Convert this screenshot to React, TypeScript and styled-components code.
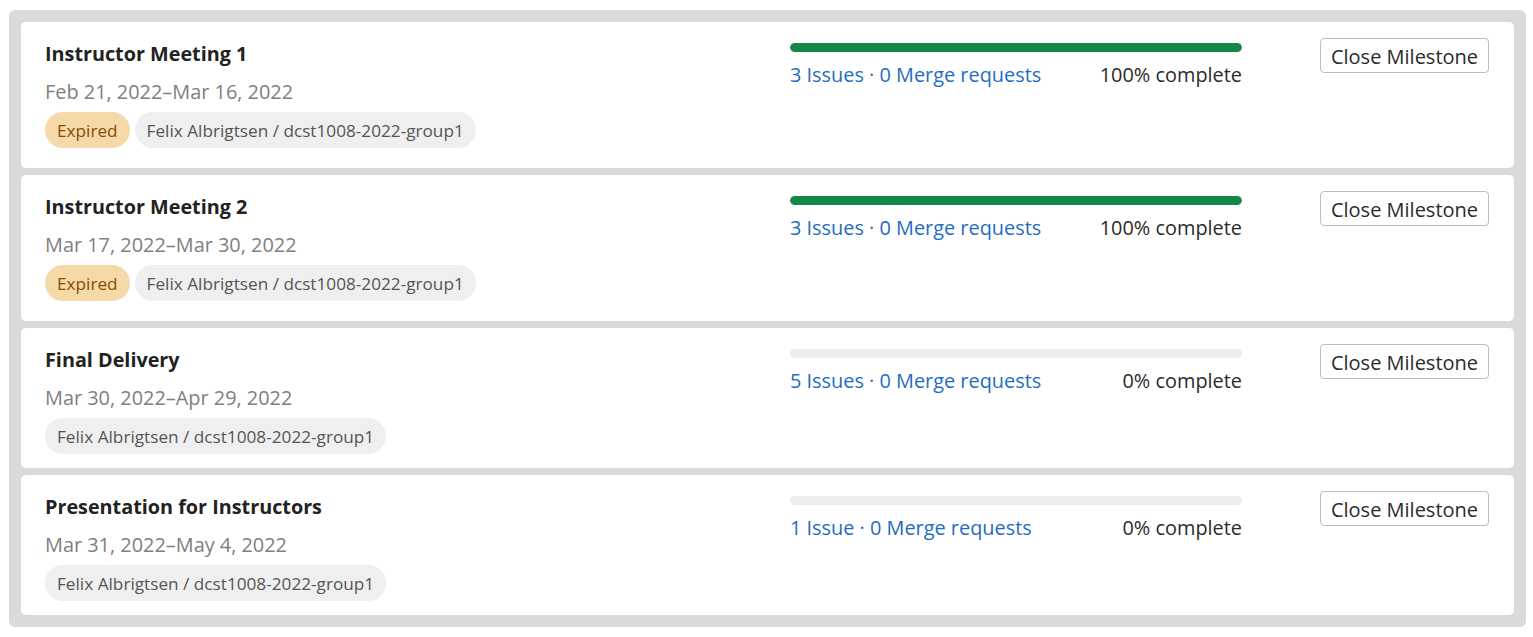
import React from "react";
import styled, { createGlobalStyle } from "styled-components";

const Global = createGlobalStyle`
  html, body { margin: 0; padding: 0; background: #ffffff; }
  body { font-family: "Open Sans", "Noto Sans", Arial, sans-serif; }
  * { box-sizing: border-box; }
`;

const Board = styled.div`
  margin: 10px 7px 0 9px;
  padding: 12px;
  background: #dadada;
  border-radius: 6px;
  display: flex;
  flex-direction: column;
  gap: 7px;
`;

const Card = styled.div<{ $tall: boolean }>`
  background: #ffffff;
  border-radius: 5px;
  padding: 17px 25px ${(p) => (p.$tall ? "20px" : "14px")} 24px;
  display: flex;
  align-items: flex-start;
`;

const Info = styled.div`
  flex: 1;
  min-width: 0;
`;

const Title = styled.div`
  font-size: 19.8px;
  font-weight: 700;
  line-height: 30px;
  color: #222222;
`;

const Dates = styled.div`
  margin-top: 8px;
  font-size: 19.9px;
  line-height: 30px;
  color: #808080;
`;

const Badges = styled.div`
  margin-top: 5px;
  display: flex;
  gap: 5px;
`;

const Badge = styled.span<{ $tone: "warning" | "neutral" }>`
  display: inline-flex;
  align-items: center;
  height: 36px;
  padding: 1px 12px 0;
  border-radius: 18px;
  font-size: 17.2px;
  background: ${(p) => (p.$tone === "warning" ? "#f5d9a8" : "#efefef")};
  color: ${(p) => (p.$tone === "warning" ? "#8a4b00" : "#555555")};
`;

const Progress = styled.div`
  width: 452px;
  margin-top: 4px;
  margin-right: 78px;
`;

const Track = styled.div`
  height: 9px;
  border-radius: 5px;
  background: #ededed;
  overflow: hidden;
`;

const Fill = styled.div`
  height: 100%;
  border-radius: 5px;
  background: #14884a;
`;

const Stats = styled.div`
  margin-top: 9px;
  display: flex;
  justify-content: space-between;
  font-size: 19.9px;
  line-height: 28px;
`;

const Links = styled.span`
  color: #1f6dc2;
`;

const Complete = styled.span`
  color: #2b2b2b;
`;

const CloseButton = styled.button`
  margin-top: -1px;
  height: 35px;
  width: 169px;
  padding: 2px 0 0;
  background: #ffffff;
  border: 1px solid #bdbdbd;
  border-radius: 4px;
  font-family: inherit;
  font-size: 20px;
  color: #2b2b2b;
  white-space: nowrap;
  cursor: pointer;
`;

type Milestone = {
  title: string;
  dates: string;
  expired: boolean;
  issues: number;
  percent: number;
};

const milestones: Milestone[] = [
  { title: "Instructor Meeting 1", dates: "Feb 21, 2022–Mar 16, 2022", expired: true, issues: 3, percent: 100 },
  { title: "Instructor Meeting 2", dates: "Mar 17, 2022–Mar 30, 2022", expired: true, issues: 3, percent: 100 },
  { title: "Final Delivery", dates: "Mar 30, 2022–Apr 29, 2022", expired: false, issues: 5, percent: 0 },
  { title: "Presentation for Instructors", dates: "Mar 31, 2022–May 4, 2022", expired: false, issues: 1, percent: 0 },
];

export default function App() {
  return (
    <>
      <Global />
      <Board>
        {milestones.map((m) => (
          <Card key={m.title} $tall={m.expired}>
            <Info>
              <Title>{m.title}</Title>
              <Dates>{m.dates}</Dates>
              <Badges>
                {m.expired && <Badge $tone="warning">Expired</Badge>}
                <Badge $tone="neutral">Felix Albrigtsen / dcst1008-2022-group1</Badge>
              </Badges>
            </Info>
            <Progress>
              <Track>
                {m.percent > 0 && <Fill style={{ width: `${m.percent}%` }} />}
              </Track>
              <Stats>
                <Links>
                  {m.issues} {m.issues === 1 ? "Issue" : "Issues"} · 0 Merge requests
                </Links>
                <Complete>{m.percent}% complete</Complete>
              </Stats>
            </Progress>
            <CloseButton>Close Milestone</CloseButton>
          </Card>
        ))}
      </Board>
    </>
  );
}
